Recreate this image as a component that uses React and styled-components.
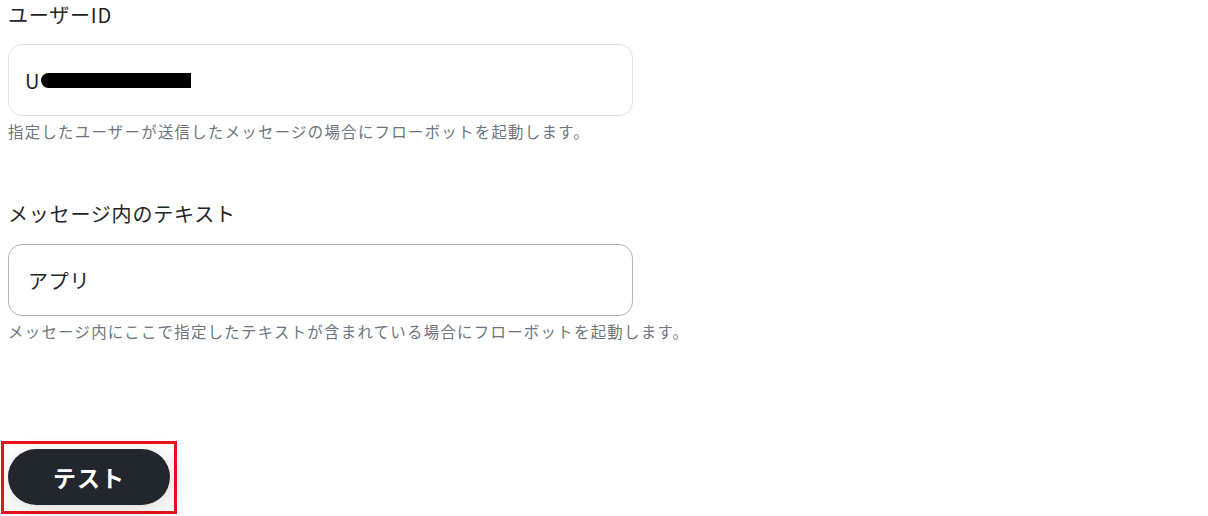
import React from "react";
import styled, { createGlobalStyle } from "styled-components";

const GlobalStyle = createGlobalStyle`
  html, body {
    margin: 0;
    padding: 0;
    background: #fff;
  }
  body {
    font-family: "Noto Sans CJK JP", "Noto Sans", sans-serif;
    color: #212529;
  }
`;

const Page = styled.div`
  width: 1208px;
  height: 516px;
  overflow: hidden;
  display: flex;
  flex-direction: column;
`;

const Form = styled.div`
  display: flex;
  flex-direction: column;
  gap: 56px;
  padding: 0 8px;
`;

const Field = styled.div`
  display: flex;
  flex-direction: column;
`;

const Label = styled.label`
  font-size: 20px;
  line-height: 30px;
  font-weight: 400;
  letter-spacing: 0.8px;
  color: #212529;
  margin-bottom: ${(p) => p.gap || 14}px;
`;

const InputBox = styled.div`
  width: 625px;
  height: 72px;
  box-sizing: border-box;
  border: 1px solid ${(p) => (p.active ? "#adb5bd" : "#dee2e6")};
  border-radius: 14px;
  display: flex;
  align-items: center;
  padding: 0 ${(p) => p.pad || 18}px;
  font-size: 20px;
  letter-spacing: 0.8px;
  color: #212529;
`;

const Masked = styled.span`
  display: inline-block;
  width: 150px;
  height: 15px;
  background: #000;
  border-radius: 8px 0 0 8px;
  margin-left: 1px;
`;

const Help = styled.p`
  margin: 3px 0 0;
  font-size: 15.4px;
  line-height: 24px;
  letter-spacing: 1.3px;
  color: #6c757d;
`;

const ButtonArea = styled.div`
  margin-top: 98px;
  padding-left: 1px;
`;

const Highlight = styled.div`
  display: inline-flex;
  border: 3px solid #e8131c;
  padding: 5px 4px 6px 4px;
`;

const TestButton = styled.button`
  width: 162px;
  height: 56px;
  border: none;
  border-radius: 28px;
  background: #22272e;
  color: #fff;
  font-family: inherit;
  font-size: 23px;
  font-weight: 700;
  letter-spacing: 1px;
  box-shadow: 4px 6px 26px rgba(0, 0, 0, 0.14);
  cursor: pointer;
`;

export default function App() {
  return (
    <>
      <GlobalStyle />
      <Page>
        <Form>
          <Field>
            <Label>ユーザーID</Label>
            <InputBox pad={16}>
              U<Masked />
            </InputBox>
            <Help>指定したユーザーが送信したメッセージの場合にフローボットを起動します。</Help>
          </Field>
          <Field>
            <Label gap={15}>メッセージ内のテキスト</Label>
            <InputBox active pad={19}>
              アプリ
            </InputBox>
            <Help>メッセージ内にここで指定したテキストが含まれている場合にフローボットを起動します。</Help>
          </Field>
        </Form>
        <ButtonArea>
          <Highlight>
            <TestButton>テスト</TestButton>
          </Highlight>
        </ButtonArea>
      </Page>
    </>
  );
}
